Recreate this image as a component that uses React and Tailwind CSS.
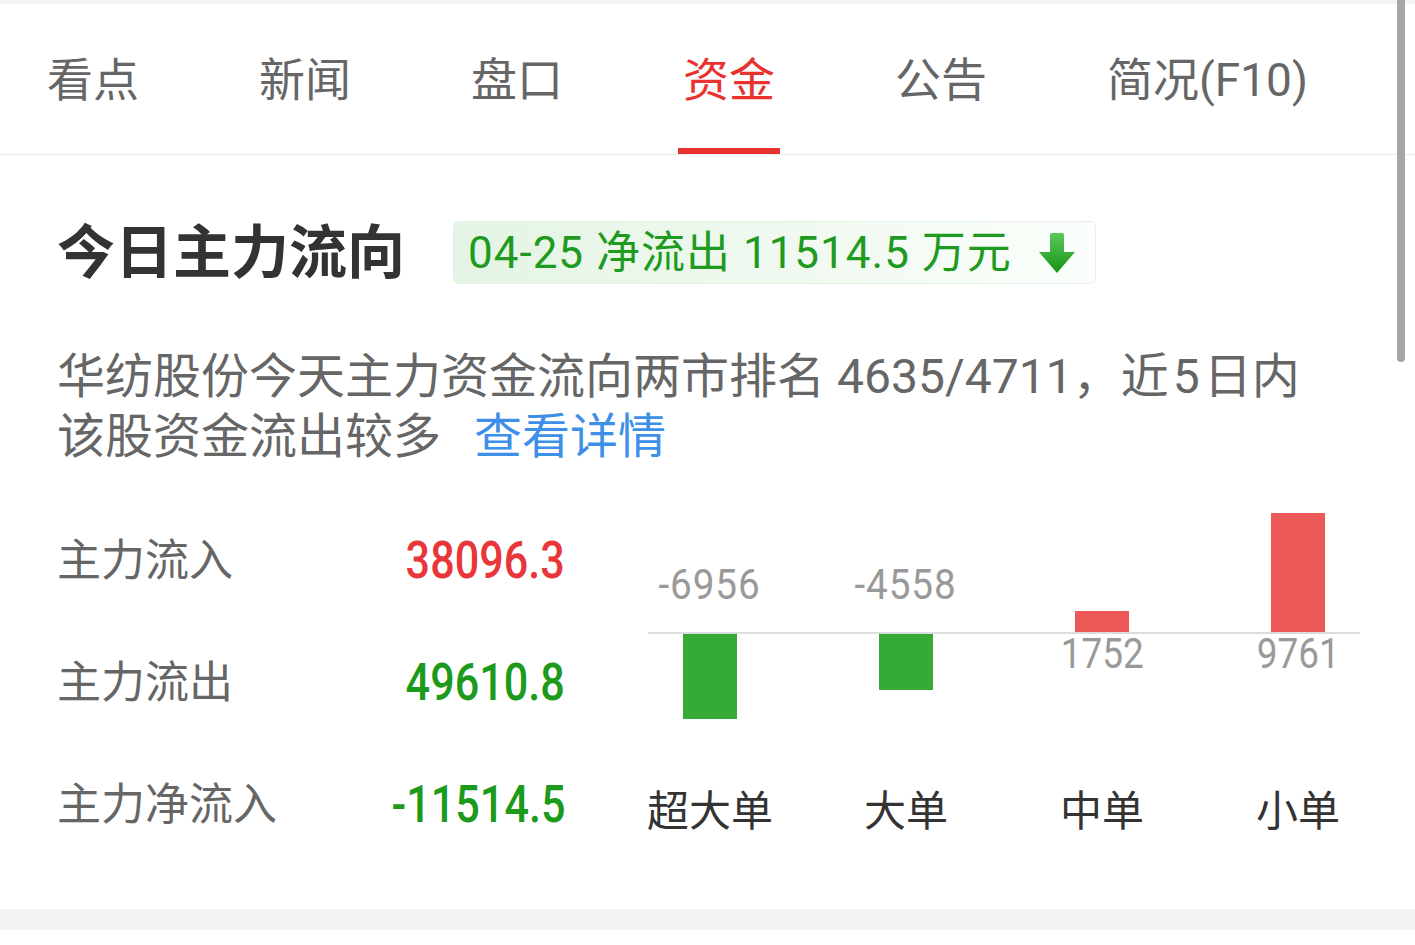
export default function App() {
  const tabs = ['看点', '新闻', '盘口', '资金', '公告', '简况(F10)'];
  const active = 3;
  const rows = [
    { label: '主力流入', value: '38096.3', color: 'text-[#e8363a]' },
    { label: '主力流出', value: '49610.8', color: 'text-[#1c9a1c]' },
    { label: '主力净流入', value: '-11514.5', color: 'text-[#1c9a1c]' },
  ];
  const bars = [
    { name: '超大单', v: -6956 },
    { name: '大单', v: -4558 },
    { name: '中单', v: 1752 },
    { name: '小单', v: 9761 },
  ];
  const max = 9761;
  const maxH = 119;

  return (
    <div className="relative w-[1415px] h-[945px] bg-white overflow-hidden font-['Roboto','Noto_Sans_CJK_SC',sans-serif]">
      <div className="h-[4px] bg-[#f2f2f2]" />
      <div className="flex h-[151px] pl-[47px] border-b border-[#ececec]">
        {tabs.map((t, i) => (
          <div key={t} className="w-[212px] flex">
            <div className="flex flex-col items-center">
              <div
                className={
                  i === active
                    ? 'flex-1 flex items-center pt-[8px] text-[46px] leading-none text-[#e8332f]'
                    : 'flex-1 flex items-center pt-[8px] text-[46px] leading-none text-[#666666]'
                }
              >
                {t}
              </div>
              <div
                className={
                  i === active
                    ? 'h-[6px] w-[calc(100%+10px)] bg-[#e8332f]'
                    : 'h-[6px] w-[calc(100%+10px)]'
                }
              />
            </div>
          </div>
        ))}
      </div>

      <div className="pl-[57px] pt-[66px]">
        <div className="flex items-center h-[63px]">
          <div className="text-[58px] font-bold text-[#333333] leading-none">今日主力流向</div>
          <div className="ml-[48px] h-[63px] flex items-center pl-[14px] pr-[18px] rounded-[6px] border border-[#e4f1e4] bg-linear-to-r from-[#e4f4e4] to-[#fbfefb] text-[44px] leading-none tracking-[1px] text-[#1e9a1e]">
            <span>04-25 净流出 11514.5 万元</span>
            <svg className="ml-[25px]" width="40" height="40" viewBox="0 0 40 40">
              <defs>
                <linearGradient id="ag" x1="0" y1="0" x2="0" y2="1">
                  <stop offset="0" stopColor="#5cc85c" />
                  <stop offset="1" stopColor="#169416" />
                </linearGradient>
              </defs>
              <path d="M13 2 Q13 0 15 0 H25 Q27 0 27 2 V19 H38 L20 40 L2 19 H13 Z" fill="url(#ag)" />
            </svg>
          </div>
        </div>

        <div className="mt-[63px] text-[48px] leading-[60px] text-[#666666]">
          <div>华纺股份今天主力资金流向两市排名<span className="ml-[12px]">4635/4711</span>，近<span className="mx-[4px]">5</span>日内</div>
          <div>
            该股资金流出较多<span className="ml-[33px] text-[#3d8fe8]">查看详情</span>
          </div>
        </div>

        <div className="mt-[33px] flex">
          <div className="w-[508px]">
            {rows.map((r) => (
              <div key={r.label} className="h-[122px] flex items-center justify-between">
                <span className="text-[44px] leading-none text-[#666666]">{r.label}</span>
                <span className={'inline-block origin-right scale-x-[0.83] text-[52px] font-medium leading-none ' + r.color}>
                  {r.value}
                </span>
              </div>
            ))}
          </div>

          <div className="ml-[47px] grid grid-cols-[repeat(4,196px)] grid-rows-[132px_2px_153px_50px]">
            {bars.map((b, i) => (
              <div key={'u' + i} className="row-start-1 flex flex-col items-center justify-end">
                {b.v > 0 ? (
                  <div className="w-[54px] bg-[#ec5757]" style={{ height: (b.v / max) * maxH }} />
                ) : (
                  <div className="mb-[27px] h-[40px] flex items-center text-[42px] leading-none tracking-[1px] text-[#999999] scale-x-[0.92]">
                    {b.v}
                  </div>
                )}
              </div>
            ))}
            <div className="row-start-2 col-span-4 mx-[36px] bg-[#dcdcdc]" />
            {bars.map((b, i) => (
              <div key={'d' + i} className="row-start-3 flex flex-col items-center justify-start">
                {b.v < 0 ? (
                  <div className="w-[54px] bg-[#35aa35]" style={{ height: (-b.v / max) * maxH }} />
                ) : (
                  <div className="h-[40px] flex items-center text-[42px] leading-none text-[#999999] scale-x-[0.88]">
                    {b.v}
                  </div>
                )}
              </div>
            ))}
            {bars.map((b, i) => (
              <div key={'n' + i} className="row-start-4 flex items-center justify-center text-[42px] leading-none text-[#333333]">
                {b.name}
              </div>
            ))}
          </div>
        </div>
      </div>

      <div className="mt-[43px] h-[21px] bg-[#f3f3f3]" />

      <div className="absolute top-0 right-[10px] w-[8px] h-[362px] rounded-b-full bg-[#a6a6a6]" />
    </div>
  );
}
